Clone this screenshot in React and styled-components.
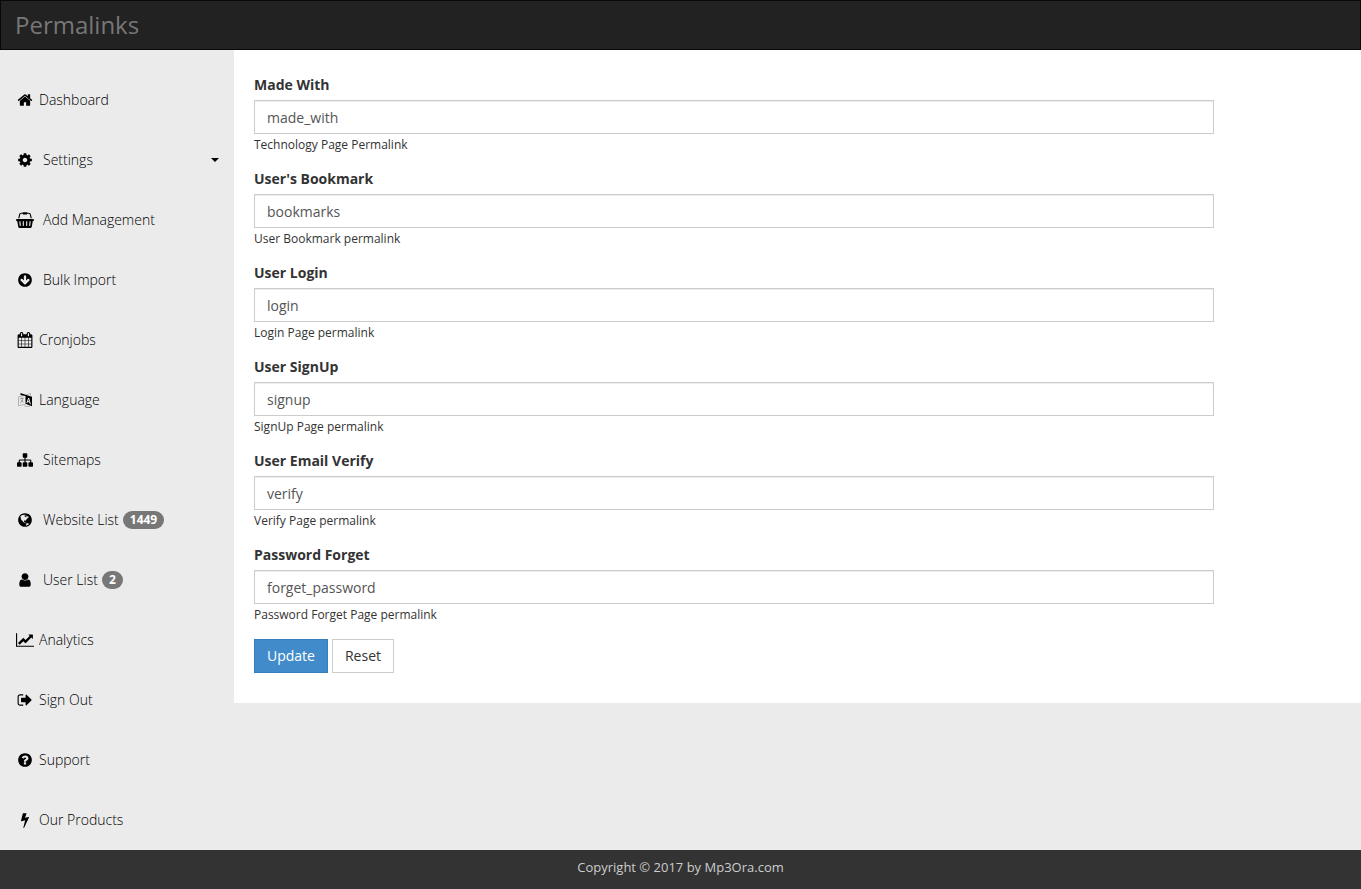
import styled, { createGlobalStyle } from 'styled-components';

const icons = {
  home: {
    d: 'M1472 992v480q0 26-19 45t-45 19h-384v-384h-256v384h-384q-26 0-45-19t-19-45v-480q0-1 .5-3t.5-3l575-474 575 474q1 2 1 6zm223-69l-62 74q-8 9-21 11h-3q-13 0-21-7l-692-577-692 577q-12 8-24 7-13-2-21-11l-62-74q-8-10-7-23.5t11-21.5l719-599q32-26 76-26t76 26l244 204v-195q0-14 9-23t23-9h192q14 0 23 9t9 23v408l219 182q10 8 11 21.5t-7 23.5z',
  },
  cog: {
    d: 'M1152 896q0-106-75-181t-181-75-181 75-75 181 75 181 181 75 181-75 75-181zm512-109v222q0 12-8 23t-20 13l-185 28q-19 54-39 91 35 50 107 138 10 12 10 25t-9 23q-27 37-99 108t-94 71q-12 0-26-9l-138-108q-44 23-91 38-16 136-29 186-7 28-36 28h-222q-14 0-24.5-8.5t-11.5-21.5l-28-184q-49-16-90-37l-141 107q-10 9-25 9-14 0-25-11-126-114-165-168-7-10-7-23 0-12 8-23 15-21 51-66.5t54-70.5q-27-50-41-99l-183-27q-13-2-21-12.5t-8-23.5v-222q0-12 8-23t19-13l186-28q14-46 39-92-40-57-107-138-10-12-10-24 0-10 9-23 26-36 98.5-107.5t94.5-71.5q13 0 26 10l138 107q44-23 91-38 16-136 29-186 7-28 36-28h222q14 0 24.5 8.5t11.5 21.5l28 184q49 16 90 37l142-107q9-9 24-9 13 0 25 10 129 119 165 170 7 8 7 22 0 12-8 23-15 21-51 66.5t-54 70.5q26 50 41 98l183 28q13 2 21 12.5t8 23.5z',
  },
  basket: {
    box: 2048,
    d: 'M1920 768q53 0 90.5 37.5t37.5 90.5-37.5 90.5-90.5 37.5h-15l-115 662q-8 46-44 76t-82 30h-1280q-46 0-82-30t-44-76l-115-662h-15q-53 0-90.5-37.5t-37.5-90.5 37.5-90.5 90.5-37.5h1792zm-1435 800q26-2 43.5-22.5t15.5-46.5l-32-416q-2-26-22.5-43.5t-46.5-15.5-43.5 22.5-15.5 46.5l32 416q2 25 20.5 42t43.5 17h5zm411-64v-416q0-26-19-45t-45-19-45 19-19 45v416q0 26 19 45t45 19 45-19 19-45zm384 0v-416q0-26-19-45t-45-19-45 19-19 45v416q0 26 19 45t45 19 45-19 19-45zm352 5l32-416q2-26-15.5-46.5t-43.5-22.5-46.5 15.5-22.5 43.5l-32 416q-2 26 15.5 46.5t43.5 22.5h5q25 0 43.5-17t20.5-42zm-1156-1217l-93 412h-132l101-441q19-88 89-143.5t160-55.5h167q0-26 19-45t45-19h384q26 0 45 19t19 45h167q90 0 160 55.5t89 143.5l101 441h-132l-93-412q-11-44-45.5-72t-79.5-28h-167q0 26-19 45t-45 19h-384q-26 0-45-19t-19-45h-167q-45 0-79.5 28t-45.5 72z',
  },
  arrowDown: {
    d: 'M1412 897q0-27-18-45l-91-91q-18-18-45-18t-45 18l-189 189v-502q0-26-19-45t-45-19h-128q-26 0-45 19t-19 45v502l-189-189q-19-19-45-19t-45 19l-91 91q-18 18-18 45t18 45l362 362 91 91q18 18 45 18t45-18l91-91 362-362q18-18 18-45zm252-1q0 209-103 385.5t-279.5 279.5-385.5 103-385.5-103-279.5-279.5-103-385.5 103-385.5 279.5-279.5 385.5-103 385.5 103 279.5 279.5 103 385.5z',
  },
  calendar: {
    d: 'M192 1664h288v-288h-288v288zm352 0h320v-288h-320v288zm-352-352h288v-320h-288v320zm352 0h320v-320h-320v320zm-352-384h288v-288h-288v288zm736 736h320v-288h-320v288zm-384-736h320v-288h-320v288zm768 736h288v-288h-288v288zm-384-352h320v-320h-320v320zm-352-864v-288q0-13-9.5-22.5t-22.5-9.5h-64q-13 0-22.5 9.5t-9.5 22.5v288q0 13 9.5 22.5t22.5 9.5h64q13 0 22.5-9.5t9.5-22.5zm736 864h288v-320h-288v320zm-384-384h320v-288h-320v288zm384 0h288v-288h-288v288zm32-480v-288q0-13-9.5-22.5t-22.5-9.5h-64q-13 0-22.5 9.5t-9.5 22.5v288q0 13 9.5 22.5t22.5 9.5h64q13 0 22.5-9.5t9.5-22.5zm384-64v1280q0 52-38 90t-90 38h-1408q-52 0-90-38t-38-90v-1280q0-52 38-90t90-38h128v-96q0-66 47-113t113-47h64q66 0 113 47t47 113v96h384v-96q0-66 47-113t113-47h64q66 0 113 47t47 113v96h128q52 0 90 38t38 90z',
  },
  sitemap: {
    d: 'M1792 1248v320q0 40-28 68t-68 28h-320q-40 0-68-28t-28-68v-320q0-40 28-68t68-28h96v-192h-512v192h96q40 0 68 28t28 68v320q0 40-28 68t-68 28h-320q-40 0-68-28t-28-68v-320q0-40 28-68t68-28h96v-192h-512v192h96q40 0 68 28t28 68v320q0 40-28 68t-68 28h-320q-40 0-68-28t-28-68v-320q0-40 28-68t68-28h96v-192q0-52 38-90t90-38h512v-192h-96q-40 0-68-28t-28-68v-320q0-40 28-68t68-28h320q40 0 68 28t28 68v320q0 40-28 68t-68 28h-96v192h512q52 0 90 38t38 90v192h96q40 0 68 28t28 68z',
  },
  globe: {
    d: 'M896 128q209 0 385.5 103t279.5 279.5 103 385.5-103 385.5-279.5 279.5-385.5 103-385.5-103-279.5-279.5-103-385.5 103-385.5 279.5-279.5 385.5-103zm274 521q-2 1-9.5 9.5t-13.5 9.5q2 0 4.5-5t5-11 3.5-7q6-7 22-15 14-6 52-12 34-8 51 11-2-2 9.5-13t14.5-12q3-2 15-4.5t15-7.5l2-22q-12 1-17.5-7t-6.5-21q0 2-6 8 0-7-4.5-8t-11.5 1-9 1q-10-3-15-7.5t-8-16.5-4-15q-2-5-9.5-11t-9.5-10q-1-2-2.5-5.5t-3-6.5-4-5.5-5.5-2.5-7 5-7.5 10-4.5 5q-3-2-6-1.5t-4.5 1-4.5 3-5 3.5q-3 2-8.5 3t-8.5 2q15-5-1-11-10-4-16-3 9-4 7.5-12t-8.5-14h5q-1-4-8.5-8.5t-17.5-8.5-13-6q-8-5-34-9.5t-33-.5q-5 6-4.5 10.5t4 14 3.5 12.5q1 6-5.5 13t-6.5 12q0 7 14 15.5t10 21.5q-3 8-16 16t-16 12q-5 8-1.5 18.5t10.5 16.5q2 2 1.5 4t-3.5 4.5-5.5 4-6.5 3.5l-3 2q-11 5-20.5-6t-13.5-26q-7-25-16-30-23-8-29 1-5-13-41-26-25-9-58-4 6-1 0-15-7-15-19-12 3-6 4-17.5t1-13.5q3-13 12-23 1-1 7-8.5t9.5-13.5.5-6q35 4 50-11 5-5 11.5-17t10.5-17q9-6 14-5.5t14.5 5.5 14.5 5q14 1 15.5-11t-7.5-20q12 1 3-17-4-7-8-9-12-4-27 5-8 4 2 8-1-1-9.5 10.5t-16.5 17.5-16-5q-1-1-5.5-13.5t-9.5-13.5q-8 0-16 15 3-8-11-15t-24-8q19-12-8-27-7-4-20.5-5t-19.5 4q-5 7-5.5 11.5t5 8 10.5 5.5 11.5 4 8.5 3q14 10 8 14-2 1-8.5 3.5t-11.5 4.5-6 4q-3 4 0 14t-2 14q-5-5-9-17.5t-7-16.5q7 9-25 6l-10-1q-4 0-16 2t-20.5 1-13.5-8q-4-8 0-20 1-4 4-2-4-3-11-9.5t-10-8.5q-46 15-94 41 6 1 12-1 5-2 13-6.5t10-5.5q34-14 42-7l5-5q14 16 20 25-7-4-30-1-20 6-22 12 7 12 5 18-4-3-11.5-10t-14.5-11-15-5q-16 0-22 1-146 80-235 222 7 7 12 8 4 1 5 9t2.5 11 11.5-3q9 8 3 19 1-1 44 27 19 17 21 21 3 11-10 18-1-2-9-9t-9-4q-3 5 .5 18.5t10.5 12.5q-7 0-9.5 16t-2.5 35.5-1 23.5l2 1q-3 12 5.5 34.5t21.5 19.5q-13 3 20 43 6 8 8 9 3 2 12 7.5t15 10 10 10.5q4 5 10 22.5t14 23.5q-2 6 9.5 20t10.5 23q-1 0-2.5 1t-2.5 1q3 7 15.5 14t15.5 13q1 3 2 10t3 11 8 2q2-20-24-62-15-25-17-29-3-5-5.5-15.5t-4.5-14.5q2 0 6 1.5t8.5 3.5 7.5 4 2 3q-3 7 2 17.5t12 18.5 17 19 12 13q6 6 14 19.5t0 13.5q9 0 20 10.5t17 19.5q5 8 8 26t5 24q2 7 8.5 13.5t12.5 9.5l16 8 13 7q5 2 18.5 10.5t21.5 11.5q10 4 16 4t14.5-2.5 13.5-3.5q15-2 29 15t21 21q36 19 55 11-2 1 .5 7.5t8 15.5 9 14.5 5.5 8.5q5 6 18 15t18 15q6-4 7-9-3 8 7 20t18 10q14-3 14-32-31 15-49-18 0-1-2.5-5.5t-4-8.5-2.5-8.5 0-7.5 5-3q9 0 10-3.5t-2-12.5-4-13q-1-8-11-20t-12-15q-5 9-16 8t-16-9q0 1-1.5 5.5t-1.5 6.5q-13 0-15-1 1-3 2.5-17.5t3.5-22.5q1-4 5.5-12t7.5-14.5 4-12.5-4.5-9.5-17.5-2.5q-19 1-26 20-1 3-3 10.5t-5 11.5-9 7q-7 3-24 2t-24-5q-13-8-22.5-29t-9.5-37q0-10 2.5-26.5t3-25-5.5-24.5q3-2 9-9.5t10-10.5q2-1 4.5-1.5t4.5 0 4-1.5 3-6q-1-1-4-3-3-3-4-3 7 3 28.5-1.5t27.5 1.5q15 11 22-2 0-1-2.5-9.5t-.5-13.5q5 27 29 9 3 3 15.5 5t17.5 5q3 2 7 5.5t5.5 4.5 5-.5 8.5-6.5q10 14 12 24 11 40 19 44 7 3 11 2t4.5-9.5 0-14-1.5-12.5l-1-8v-18l-1-8q-15-3-18.5-12t1.5-18.5 15-18.5q1-1 8-3.5t15.5-6.5 12.5-8q21-19 15-35 7 0 11-9-1 0-5-3t-7.5-5-4.5-2q9-5 2-16 5-3 7.5-11t7.5-10q9 12 21 2 8-8 1-16 5-7 20.5-10.5t18.5-9.5q7 2 8-2t1-12 3-12q4-5 15-9t13-5l17-11q3-4 0-4 18 2 31-11 10-11-6-20 3-6-3-9.5t-15-5.5q3-1 11.5-.5t10.5-1.5q15-10-7-16-17-5-43 12zm-163 877q206-36 351-189-3-3-12.5-4.5t-12.5-3.5q-18-7-24-8 1-7-2.5-13t-8-9-12.5-8-11-7q-2-2-7-6t-7-5.5-7.5-4.5-8.5-2-10 1l-3 1q-3 1-5.5 2.5t-5.5 3-4 3 0 2.5q-21-17-36-22-5-1-11-5.5t-10.5-7-10-1.5-11.5 7q-5 5-6 15t-2 13q-7-5 0-17.5t2-18.5q-3-6-10.5-4.5t-12 4.5-11.5 8.5-9 6.5-8.5 5.5-8.5 7.5q-3 4-6 12t-5 11q-2-4-11.5-6.5t-9.5-5.5q2 10 4 35t5 38q7 31-12 48-27 25-29 40-4 22 12 26 0 7-8 20.5t-7 21.5q0 6 2 16z',
  },
  user: {
    d: 'M1536 1399q0 109-62.5 187t-150.5 78h-854q-88 0-150.5-78t-62.5-187q0-85 8.5-160.5t31.5-152 58.5-131 94-89 134.5-34.5q131 128 313 128t313-128q76 0 134.5 34.5t94 89 58.5 131 31.5 152 8.5 160.5zm-256-887q0 159-112.5 271.5t-271.5 112.5-271.5-112.5-112.5-271.5 112.5-271.5 271.5-112.5 271.5 112.5 112.5 271.5z',
  },
  chart: {
    box: 2048,
    d: 'M2048 1536v128h-2048v-1536h128v1408h1920zm-128-1248v435q0 21-19.5 29.5t-35.5-7.5l-121-121-633 633q-10 10-23 10t-23-10l-233-233-416 416-192-192 585-585q10-10 23-10t23 10l233 233 464-464-121-121q-16-16-7.5-35.5t29.5-19.5h435q14 0 23 9t9 23z',
  },
  signOut: {
    d: 'M704 1440q0 4 1 20t.5 26.5-3 23.5-10 19.5-20.5 6.5h-320q-119 0-203.5-84.5t-84.5-203.5v-704q0-119 84.5-203.5t203.5-84.5h320q13 0 22.5 9.5t9.5 22.5q0 4 1 20t.5 26.5-3 23.5-10 19.5-20.5 6.5h-320q-66 0-113 47t-47 113v704q0 66 47 113t113 47h312l11.5 1 11.5 3 8 5.5 7 9 2 13.5zm928-544q0 26-19 45l-544 544q-19 19-45 19t-45-19-19-45v-288h-448q-26 0-45-19t-19-45v-384q0-26 19-45t45-19h448v-288q0-26 19-45t45-19 45 19l544 544q19 19 19 45z',
  },
  question: {
    d: 'M1024 1376v-192q0-14-9-23t-23-9h-192q-14 0-23 9t-9 23v192q0 14 9 23t23 9h192q14 0 23-9t9-23zm256-672q0-88-55.5-163t-138.5-116-170-41q-243 0-371 213-15 24 8 42l132 100q7 6 19 6 16 0 25-12 53-68 86-92 34-24 86-24 48 0 85.5 26t37.5 59q0 38-20 61t-68 45q-63 28-115.5 86.5t-52.5 125.5v36q0 14 9 23t23 9h192q14 0 23-9t9-23q0-19 21.5-49.5t54.5-49.5q32-18 49-28.5t46-35 44.5-48 28-60.5 12.5-81zm384 192q0 209-103 385.5t-279.5 279.5-385.5 103-385.5-103-279.5-279.5-103-385.5 103-385.5 279.5-279.5 385.5-103 385.5 103 279.5 279.5 103 385.5z',
  },
  bolt: {
    d: 'M1333 566q18 20 7 44l-540 1157q-13 25-42 25-4 0-14-2-17-5-25.5-19t-4.5-30l197-808-406 101q-4 1-12 1-18 0-31-11-18-15-13-39l201-825q4-14 16-23t28-9h328q19 0 32 12.5t13 29.5q0 8-5 18l-171 463 396-98q8-2 12-2 19 0 34 15z',
  },
};

const menu = [
  { label: 'Dashboard', icon: 'home' },
  { label: 'Settings', icon: 'cog', wide: true, dropdown: true },
  { label: 'Add Management', icon: 'basket', wide: true },
  { label: 'Bulk Import', icon: 'arrowDown', wide: true },
  { label: 'Cronjobs', icon: 'calendar' },
  { label: 'Language', icon: 'language' },
  { label: 'Sitemaps', icon: 'sitemap', wide: true },
  { label: 'Website List', icon: 'globe', wide: true, count: 1449 },
  { label: 'User List', icon: 'user', wide: true, count: 2 },
  { label: 'Analytics', icon: 'chart' },
  { label: 'Sign Out', icon: 'signOut' },
  { label: 'Support', icon: 'question' },
  { label: 'Our Products', icon: 'bolt' },
];

const fields = [
  { id: 'made_with', label: 'Made With', value: 'made_with', help: 'Technology Page Permalink' },
  { id: 'bookmarks', label: "User's Bookmark", value: 'bookmarks', help: 'User Bookmark permalink' },
  { id: 'login', label: 'User Login', value: 'login', help: 'Login Page permalink' },
  { id: 'signup', label: 'User SignUp', value: 'signup', help: 'SignUp Page permalink' },
  { id: 'verify', label: 'User Email Verify', value: 'verify', help: 'Verify Page permalink' },
  { id: 'forget', label: 'Password Forget', value: 'forget_password', help: 'Password Forget Page permalink' },
];

const LanguageIcon = () => (
  <svg width="16" height="16" viewBox="0 0 16 16" fill="none" aria-hidden="true">
    <path d="M8.5 3.2L1.5 4.6v9.2l7-1.6M8.5 3l5-1.5v2.2M7 13.6c2 1.3 4.500 1.200 6.200.2" stroke="#999" strokeWidth=".7" />
    <path d="M3 6.800l3.500-.8M4.700 5.500v1.200M3.200 11c1.600-1 2.500-2.300 2.800-4.500M3.700 8l2.800 2.400" stroke="#777" strokeWidth=".7" />
    <path d="M3.500 1l5 1.700 6.500 2v9.500l-6.500-2.400V4.100L3.500 3z" fill="#000" />
    <path d="M9.900 11l1.800-5 1.700 6.300M10.400 9.400l2.500.7" stroke="#ebebeb" strokeWidth="1" />
  </svg>
);

const Icon = ({ name }) => {
  if (name === 'language') return <LanguageIcon />;
  const { d, box = 1792 } = icons[name];
  return (
    <svg width={box === 2048 ? 18 : 16} height="16" viewBox={`0 0 ${box} 1792`} fill="currentColor" aria-hidden="true">
      <path d={d} />
    </svg>
  );
};

const App = () => {
  return (
    <>
      <GlobalStyle />
      <Page>
        <Navbar>
          <Brand>Permalinks</Brand>
        </Navbar>
        <Body>
          <Sidebar aria-label="Main menu">
            {menu.map((item) => (
              <MenuLink key={item.label} href="#" $wide={item.wide}>
                <IconBox>
                  <Icon name={item.icon} />
                </IconBox>
                <span>{item.label}</span>
                {item.count && <Badge>{item.count}</Badge>}
                {item.dropdown && <Caret />}
              </MenuLink>
            ))}
          </Sidebar>
          <Content>
            <Form onSubmit={(e) => e.preventDefault()}>
              {fields.map((field) => (
                <FormGroup key={field.id}>
                  <Label htmlFor={field.id}>{field.label}</Label>
                  <Input id={field.id} type="text" defaultValue={field.value} />
                  <Help>{field.help}</Help>
                </FormGroup>
              ))}
              <Actions>
                <Button type="submit" $primary>
                  Update
                </Button>
                <Button type="reset">Reset</Button>
              </Actions>
            </Form>
          </Content>
        </Body>
        <Footer>Copyright © 2017 by Mp3Ora.com</Footer>
      </Page>
    </>
  );
};

const GlobalStyle = createGlobalStyle`
  * {
    box-sizing: border-box;
  }

  body {
    margin: 0;
    background: #ebebeb;
    color: #333;
    font-family: 'Open Sans', sans-serif;
    font-size: 14px;
    line-height: 20px;
  }
`;

const Page = styled.div`
  display: flex;
  flex-direction: column;
  min-height: 100vh;
`;

const Navbar = styled.header`
  height: 50px;
  padding: 0 14px;
  background: #222;
  border: 1px solid #080808;
`;

const Brand = styled.h1`
  margin: 0;
  color: #777;
  font-size: 24px;
  font-weight: 400;
  line-height: 48px;
`;

const Body = styled.div`
  display: flex;
  flex: 1;
  align-items: flex-start;
`;

const Sidebar = styled.nav`
  flex: 0 0 234px;
  padding-top: 20px;
`;

const MenuLink = styled.a`
  display: flex;
  align-items: center;
  gap: 4px;
  height: 60px;
  padding: 0 15px;
  color: #000;
  font-weight: 300;
  text-decoration: none;

  > span:nth-child(2) {
    margin-left: ${({ $wide }) => ($wide ? '4px' : '0')};
  }
`;

const IconBox = styled.span`
  display: flex;
  justify-content: center;
  width: 20px;
`;

const Badge = styled.span`
  padding: 3px 7px;
  border-radius: 10px;
  background: #777;
  color: #fff;
  font-size: 12px;
  font-weight: 700;
  line-height: 12px;
`;

const Caret = styled.span`
  margin-left: auto;
  border-top: 4px solid #000;
  border-right: 4px solid transparent;
  border-left: 4px solid transparent;
`;

const Content = styled.main`
  flex: 1;
  min-width: 0;
  padding: 25px 20px 30px;
  background: #fff;
`;

const Form = styled.form`
  max-width: 960px;
`;

const FormGroup = styled.div`
  margin-bottom: 14px;
`;

const Label = styled.label`
  display: block;
  margin-bottom: 5px;
  font-weight: 700;
`;

const Input = styled.input`
  display: block;
  width: 100%;
  height: 34px;
  padding: 6px 12px;
  border: 1px solid #ccc;
  border-radius: 0;
  outline: none;
  background: #fff;
  box-shadow: inset 0 1px 1px rgba(0, 0, 0, 0.075);
  color: #555;
  font: inherit;
`;

const Help = styled.small`
  display: block;
  font-size: 12px;
  line-height: 21px;
`;

const Actions = styled.div`
  display: flex;
  gap: 4px;
`;

const Button = styled.button`
  height: 34px;
  padding: 0 12px;
  border: 1px solid ${({ $primary }) => ($primary ? '#357ebd' : '#ccc')};
  background: ${({ $primary }) => ($primary ? '#428bca' : '#fff')};
  color: ${({ $primary }) => ($primary ? '#fff' : '#333')};
  font: inherit;
  cursor: pointer;
`;

const Footer = styled.footer`
  height: 39px;
  background: #333;
  color: #ccc;
  font-size: 13px;
  line-height: 35px;
  text-align: center;
`;

export default App;
